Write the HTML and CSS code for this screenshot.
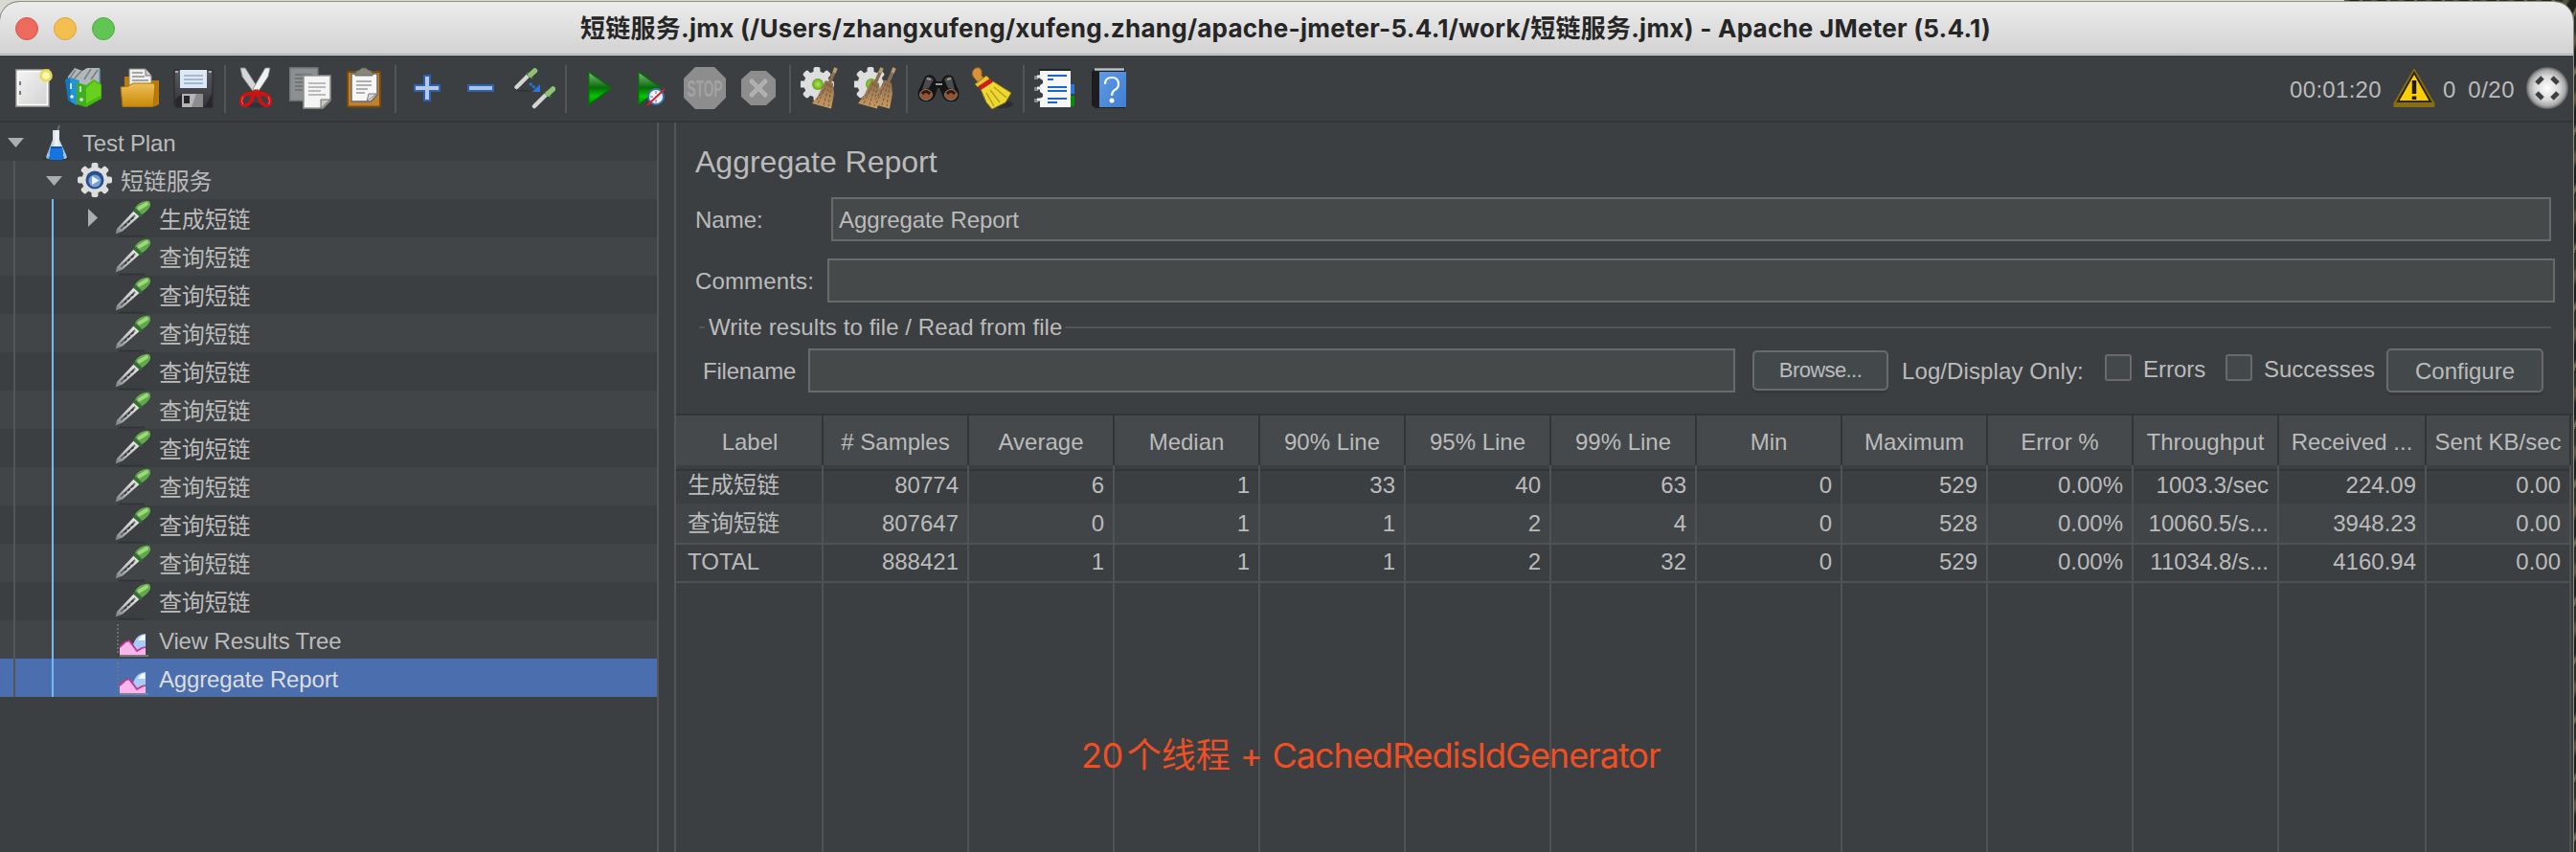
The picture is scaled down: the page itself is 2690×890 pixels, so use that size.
FILE: index.html
```html
<!DOCTYPE html>
<html lang="zh-CN">
<head>
<meta charset="utf-8">
<title>短链服务.jmx - Apache JMeter (5.4.1)</title>
<link rel="stylesheet" href="styles.css">
</head>
<body>
<svg class="defs" width="0" height="0" aria-hidden="true">
  <defs>
    <linearGradient id="paper" x1="0" y1="0" x2="1" y2="1"><stop offset="0" stop-color="#f4f4f4"/><stop offset="1" stop-color="#d2d2d2"/></linearGradient>
    <linearGradient id="folder" x1="0" y1="0" x2="0" y2="1"><stop offset="0" stop-color="#eebf5c"/><stop offset="1" stop-color="#c98a06"/></linearGradient>
    <linearGradient id="play" x1="0" y1="0" x2="0" y2="1"><stop offset="0" stop-color="#7cc47c"/><stop offset=".48" stop-color="#0b6a0b"/><stop offset=".75" stop-color="#00c800"/><stop offset="1" stop-color="#0a7d0a"/></linearGradient>
    <linearGradient id="disk" x1="0" y1="0" x2="0" y2="1"><stop offset="0" stop-color="#5a5a62"/><stop offset="1" stop-color="#333338"/></linearGradient>
    <linearGradient id="book" x1="0" y1="0" x2="1" y2="1"><stop offset="0" stop-color="#5f9ae4"/><stop offset="1" stop-color="#3f7fd2"/></linearGradient>
    <linearGradient id="flask" x1="0" y1="0" x2="1" y2="0"><stop offset="0" stop-color="#8fa0ac"/><stop offset=".5" stop-color="#f2f5f8"/><stop offset="1" stop-color="#a9b5c0"/></linearGradient>
    <linearGradient id="glass" x1="0" y1="1" x2="1" y2="0"><stop offset="0" stop-color="#77797b"/><stop offset=".45" stop-color="#c4c4c4"/><stop offset="1" stop-color="#ececec"/></linearGradient>
    <linearGradient id="straw" x1="0" y1="0" x2="0" y2="1"><stop offset="0" stop-color="#8a6a48"/><stop offset=".5" stop-color="#a8845c"/><stop offset="1" stop-color="#cf9c5c"/></linearGradient>
    <radialGradient id="ball"><stop offset="0" stop-color="#ffffff"/><stop offset=".6" stop-color="#d6d6d6"/><stop offset=".85" stop-color="#a8a8a8"/><stop offset="1" stop-color="#5c5e60"/></radialGradient>
    <radialGradient id="green"><stop offset="0" stop-color="#b8e84a"/><stop offset="1" stop-color="#5fa81c"/></radialGradient>

    <symbol id="pipette" viewBox="0 0 40 40">
      <path d="M4 38.600H31" stroke="#303335" stroke-width="1.800"/>
      <path d="M.5 36.500L2 31L19.500 12.500L25.500 18L8 33.500Z" fill="url(#glass)"/>
      <path d="M6 31L21 17" stroke="#5b5e60" stroke-width="1.800"/>
      <path d="M10 28L20 18.500" stroke="#303335" stroke-width="1.600" stroke-dasharray="3 2"/>
      <path d="M20 10.500L28 17.500" stroke="#34702f" stroke-width="4"/>
      <path d="M21 9L28.500 16Q34 13 37 7Q38 1 32 2Q25 3 21 9Z" fill="#60a84c"/>
      <path d="M25.500 9.500L33 5" stroke="#9fd57c" stroke-width="4" stroke-linecap="round"/>
    </symbol>
    <symbol id="chart" viewBox="0 0 40 40">
      <path d="M3 4V36" stroke="#77797b" stroke-width="1.500" stroke-dasharray="2 2"/>
      <path d="M5 37H35" stroke="#8a8c8e" stroke-width="1.500"/>
      <path d="M19 25Q23 14 32 14V29L28 29L23 31Z" fill="#a9cafa"/>
      <path d="M24 21Q27 15 31.500 15V21Z" fill="#f3f9ff"/>
      <path d="M5 36V28L11 23L15 21.500L20 27L23 31L27 30L32 28V36Z" fill="#fbb4ec"/>
      <path d="M5 28L11 22.500L15 21.500L20 28L23 32L28 29L32 28" fill="none" stroke="#c03a8c" stroke-width="1.800"/>
    </symbol>
    <symbol id="cog" viewBox="0 0 36 36">
      <g fill="#dedede"><circle cx="18" cy="18" r="13.500"/>
      <rect x="14.500" y="0" width="7" height="36" rx="2"/><rect x="14.500" y="0" width="7" height="36" rx="2" transform="rotate(45 18 18)"/><rect x="14.500" y="0" width="7" height="36" rx="2" transform="rotate(90 18 18)"/><rect x="14.500" y="0" width="7" height="36" rx="2" transform="rotate(135 18 18)"/></g>
    </symbol>
    <symbol id="besom" viewBox="0 0 28 44">
      <path d="M26 1L19 17" stroke="#8b6d4f" stroke-width="3.500"/><path d="M26 1L24 6" stroke="#b99a77" stroke-width="3.500"/>
      <path d="M15 14L23 17L24 28L21 43.500L1 38L7 30Z" fill="url(#straw)"/>
      <path d="M17 17L7 38M19 18L13 40M21 19L18 41M13 24L6 34" stroke="#745536" stroke-width="1" stroke-dasharray="3 2"/>
    </symbol>
  </defs>
</svg>

<div class="window">
  <header class="titlebar">
    <div class="lights"><i class="light red"></i><i class="light yellow"></i><i class="light green"></i></div>
    <h1 class="title">短链服务.jmx (/Users/zhangxufeng/xufeng.zhang/apache-jmeter-5.4.1/work/短链服务.jmx) - Apache JMeter (5.4.1)</h1>
  </header>

  <nav class="toolbar">
    <svg class="tool" viewBox="0 0 44 44"><rect x="4.800" y="2.800" width="34.400" height="38.400" fill="url(#paper)" stroke="#8b8d85" stroke-width="1.600"/><rect x="6.500" y="4.500" width="31" height="35" fill="none" stroke="#fff" stroke-width="1.500"/><path d="M9 15v4M9 25v4" stroke="#77777c" stroke-width="2"/><circle cx="36" cy="9" r="6.800" fill="#e9dc5a"/><circle cx="36" cy="9" r="3.800" fill="#fff9c0"/></svg>
    <svg class="tool" viewBox="0 0 44 44"><path d="M3 10L10 1L18 4L23 1H36V18L18 22L2 17Z" fill="#b2b7b9"/><path d="M4 13L11 3M8 14L17 4M20 13L27 2M27 13L34 3" stroke="#777e82" stroke-width="1.500"/><path d="M36 2V18" stroke="#6b93ad" stroke-width="1.500"/><path d="M0 13L5 11L12 16V40L3 35Z" fill="#1377bd"/><path d="M5 11L15 14L12 40L6 36Z" fill="#2494d4"/><path d="M12 16L22 19V42L12 39Z" fill="#3fae1f"/><path d="M22 19L30 13L38 18V33L22 42Z" fill="#46b811"/><path d="M22 22L30 15L37 19V30L22 38Z" fill="#68cf1c"/><circle cx="7" cy="31" r="1.800" fill="#fff"/><circle cx="17" cy="34" r="1.800" fill="#fff"/><path d="M6 17v6M16 20v6" stroke="#c3e4f0" stroke-width="2"/></svg>
    <svg class="tool" viewBox="0 0 44 44"><path d="M6 10H13L15 14H42V39L38 41H6Z" fill="#b97c08"/><path d="M11 2H28L34 9V24H11Z" fill="#f0f0f0" stroke="#85877f" stroke-width="1"/><path d="M28 2V9H34" fill="#ccc" stroke="#777" stroke-width="1"/><path d="M14 6H25M14 10H27M14 14H31M14 18H31" stroke="#8c8c8c" stroke-width="1.500"/><path d="M2 21L10 20L15 17H37L38 20L36 41.500H4Z" fill="url(#folder)" stroke="#a87206" stroke-width="1"/></svg>
    <svg class="tool" viewBox="0 0 44 44"><path d="M2 3H42V42H4L2 40Z" fill="url(#disk)" stroke="#26272a"/><path d="M3 5h3M38 5h3" stroke="#aaa" stroke-width="2"/><path d="M3 34L10 28V42H4ZM41 28L34 42H41Z" fill="#26262b"/><rect x="8" y="3" width="28" height="19" fill="#dce8f3"/><path d="M12 9H32M12 13H32M12 17H32" stroke="#8fa9c4" stroke-width="1.700"/><rect x="10" y="28" width="22" height="14" fill="#b4b4b4"/><path d="M25 28H32V42H20Z" fill="#8c8c8c"/><rect x="12" y="30" width="6" height="8" fill="#26262b"/></svg>
    <span class="rule"></span>
    <svg class="tool" viewBox="0 0 44 44"><ellipse cx="21" cy="40" rx="14" ry="2.500" fill="#303335"/><path d="M5 1L10 1L24 23L20 28L7 10Z" fill="#d6d6d6" stroke="#858585" stroke-width=".8"/><path d="M36 1L31 1L18 23L22 28L34 10Z" fill="#f0f0f0" stroke="#858585" stroke-width=".8"/><path d="M19 24L21 28L24 24" stroke="#d01818" stroke-width="4" fill="none"/><path d="M19 28L14 28Q8 28 6 34Q5 41 11 40Q17 38 19 28ZM24 28L29 28Q34 29 36 34Q37 41 31 40Q25 38 24 28Z" fill="none" stroke="#c81414" stroke-width="4"/><path d="M8 31Q5 36 8 39M34 31Q37 36 34 39" fill="none" stroke="#f25050" stroke-width="1.200"/></svg>
    <svg class="tool" viewBox="0 0 44 44"><rect x=".8" y="1" width="29" height="34" fill="#8d9092" stroke="#777a7b" stroke-width="1.600"/><path d="M6 8H24M6 12H15M6 16H15M6 20H15M6 24H15" stroke="#6a6d6e" stroke-width="1.500"/><path d="M15 9H43V35L35 43H15Z" fill="#f4f4f4" stroke="#90928c" stroke-width="1.600"/><path d="M33 43V34H43Z" fill="#c6c9c0" stroke="#6e7268"/><path d="M20 17H38M20 21H38M20 25H33M20 29H38" stroke="#a8a8a8" stroke-width="1.700"/></svg>
    <svg class="tool" viewBox="0 0 44 44"><rect x="5" y="5" width="34" height="36.500" rx="1" fill="#c08030" stroke="#7c4a06" stroke-width="2"/><path d="M9 7H36V29L29 36H9Z" fill="#f6f6f6" stroke="#686868" stroke-width="1.500"/><path d="M25 36L27 28H35Z" fill="#dcdcdc" stroke="#777"/><path d="M14 15H30M14 19H30M14 23H26M14 27H23" stroke="#999" stroke-width="1.700"/><path d="M13 9V6Q14 4 18 3Q19 1 22 1Q25 1 26 3Q30 4 31 6V9Z" fill="#858878" stroke="#686b60"/></svg>
    <span class="rule"></span>
    <svg class="tool" viewBox="0 0 44 44"><path d="M19 9H25V19H35V25H25V35H19V25H9V19H19Z" fill="#b4cae8" stroke="#2f62ab" stroke-width="2"/></svg>
    <svg class="tool" viewBox="0 0 44 44"><rect x="9" y="19" width="26" height="6" fill="#a9c3e6" stroke="#2f62ab" stroke-width="2"/></svg>
    <svg class="tool" viewBox="0 0 44 44"><path d="M4 25H18" stroke="#303335" stroke-width="1.500"/><path d="M3.500 21L15 9.500M22 41L33 30" stroke="#d4d4d0" stroke-width="4.500" stroke-linecap="round"/><path d="M14 6L20 12M33 26L39 31" stroke="#42703c" stroke-width="3"/><path d="M18 8L22.500 4M36 28L41.500 23" stroke="#8fc274" stroke-width="5.500" stroke-linecap="round"/><path d="M17 17L24 23" stroke="#2476e8" stroke-width="2.500" stroke-dasharray="3 1"/><path d="M20 26H28V18Z" fill="#2476e8"/></svg>
    <span class="rule"></span>
    <svg class="tool" viewBox="0 0 44 44"><path d="M12.700 5L36.500 22L12.700 39.500Z" fill="url(#play)" stroke="#0a6b0a" stroke-width="1.500"/></svg>
    <svg class="tool" viewBox="0 0 44 44"><path d="M8.700 5L32.500 22L8.700 39.500Z" fill="url(#play)" stroke="#0a6b0a" stroke-width="1.500"/><circle cx="27" cy="31" r="8" fill="#f0f3f8" stroke="#3d74b8" stroke-width="2"/><path d="M27 25v3M27 34v3M21 31h3" stroke="#667"/><path d="M18 40L36 23" stroke="#d0202c" stroke-width="2"/></svg>
    <svg class="tool" viewBox="0 0 44 44"><path d="M12 0H32L44 12V32L32 44H12L0 32V12Z" fill="#8d8d8d"/><g transform="translate(22 30.500) scale(.57 1)"><text class="stop-word" text-anchor="middle">STOP</text></g></svg>
    <svg class="tool" viewBox="0 0 44 44"><path d="M14 4H30L40 13V31L30 40H14L4 31V13Z" fill="#8d8d8d"/><path d="M15 15L29 29M29 15L15 29" stroke="#b0b0b0" stroke-width="5" stroke-linecap="round"/></svg>
    <span class="rule"></span>
    <svg class="tool" viewBox="0 0 44 44"><use href="#cog" x="-1" y="0" width="36" height="36"/><circle cx="18" cy="18" r="6" fill="url(#green)"/><use href="#besom" x="11" y="0" width="28" height="44"/></svg>
    <svg class="tool" viewBox="0 0 44 44"><use href="#cog" x="-1" y="0" width="36" height="36"/><circle cx="18" cy="18" r="6" fill="url(#green)"/><use href="#besom" x="3" y="0" width="28" height="44"/><use href="#besom" x="16" y="0" width="28" height="44"/></svg>
    <span class="rule"></span>
    <svg class="tool" viewBox="0 0 44 44"><path d="M8 10Q14 6 18 11L20 15H25L27 11Q32 6 37 10L43 25Q45 36 36 36Q28 37 26 29L23 22H21L19 29Q16 37 8 36Q-1 35 1 25Z" fill="#151515"/><path d="M9 11Q13 9 17 13L12 22L5 24ZM36 11Q32 9 28 13L32 22L39 24Z" fill="#4a4b4d"/><path d="M10 12L14 13M31 13L35 12M19 18H26" stroke="#9b9b9b" stroke-width="2"/><ellipse cx="9" cy="29" rx="6.500" ry="5.500" fill="#96542e" stroke="#777" stroke-width="1"/><ellipse cx="35" cy="29" rx="6.500" ry="5.500" fill="#96542e" stroke="#777" stroke-width="1"/><path d="M5 28Q9 23 13 28M31 28Q35 23 39 28" fill="none" stroke="#36180b" stroke-width="3"/></svg>
    <svg class="tool" viewBox="0 0 44 44"><ellipse cx="31" cy="39" rx="13" ry="4" fill="#2d2f31"/><path d="M2 4Q4 0 9 1Q12 3 11 9L15 14L9 18L3 11Q0 8 2 4Z" fill="#d6923d" stroke="#9c6117"/><path d="M4 18L16 9L21 14L7 21Z" fill="#e5c82b" stroke="#8c7610"/><path d="M10 23L23 15L42 27L36 37L22 44L16 37Z" fill="#edd833" stroke="#8c7a12"/><path d="M16 27L24 41M20 24L30 37M24 21L37 32" stroke="#b79f19" stroke-width="1.500"/><path d="M9 22L21 14" stroke="#cf1c1c" stroke-width="5"/></svg>
    <span class="rule"></span>
    <svg class="tool" viewBox="0 0 44 44"><path d="M5 3H38" stroke="#222" stroke-width="2"/><rect x="37" y="18" width="5" height="10" fill="#2879e0"/><rect x="37" y="30" width="5" height="11" fill="#078d07"/><path d="M6 4H38V42H6V33L9 31V28L6 26V19L9 17V14L6 12Z" fill="#f7f7f7"/><path d="M0 11h4M0 23h4M0 35h4" stroke="#888" stroke-width="4"/><path d="M3 10h5M3 22h5M3 34h5" stroke="#eee" stroke-width="3"/><path d="M14 9H34M14 13H20M14 21H34M14 25H34M14 33H34M14 37H24" stroke="#1765dc" stroke-width="2"/></svg>
    <svg class="tool" viewBox="0 0 44 44"><path d="M4 5L8 1H39V43H8L4 40Z" fill="#1d1d1d"/><path d="M7 2.500H38" stroke="#bfc3c6" stroke-width="2.500"/><path d="M12 5H40V42H12Z" fill="url(#book)"/><path d="M18 18Q18 11 25 11Q32 11 32 18Q32 22 28 24Q25 26 25 30" fill="none" stroke="#f2f6fb" stroke-width="2.200"/><circle cx="25" cy="35" r="2.500" fill="#fff"/></svg>

    <div class="status">
      <span class="clock">00:01:20</span>
      <svg class="warn" viewBox="0 0 44 44"><path d="M22 3L42.500 38V41H1.500V38Z" fill="#8a6d10" stroke="#8a6d10" stroke-width="2" stroke-linejoin="round"/><path d="M22 6L39 36H5Z" fill="#ffcf05" stroke="#2d2503" stroke-width="2"/><path d="M22 14V28M22 30.500V34" stroke="#1d1a10" stroke-width="4.500"/></svg>
      <span class="errors-count">0</span>
      <span class="threads">0/20</span>
      <svg class="run" viewBox="0 0 44 44"><circle cx="22" cy="22" r="22" fill="url(#ball)"/><path d="M11 17L17 11M27 11L33 17M33 27L27 33M17 33L11 27" stroke="#3d3f40" stroke-width="5"/></svg>
    </div>
  </nav>

  <main class="workspace">
    <aside class="tree">
      <div class="node d0"><span class="twist open"></span><svg class="icon" viewBox="0 0 40 40"><path d="M22 3L20 9" stroke="#6b6e70" stroke-width="2"/><ellipse cx="19" cy="37.500" rx="14" ry="1.500" fill="#2a2c2e"/><path d="M15 8H22V18L30 36Q30 38 26 38H10Q8 38 8 36L15 18Z" fill="url(#flask)"/><path d="M13 25H25L27 36Q27 39 24 39H14Q10 39 11 36Z" fill="#1474e0"/><path d="M13 26H24" stroke="#0f55b5" stroke-width="2"/><path d="M9 34H12M26 34H29" stroke="#8fc2ff" stroke-width="3"/></svg><span class="name">Test Plan</span></div>
      <div class="node d1 alt"><span class="twist open"></span><svg class="icon" viewBox="0 0 40 40"><use href="#cog" x="1" y="2" width="36" height="36"/><circle cx="19" cy="20" r="9.500" fill="#28508e"/><circle cx="19" cy="21" r="6.500" fill="#7b9fd2"/><path d="M16 16L23.500 20.500L16 25Z" fill="#eef4ff"/></svg><span class="name">短链服务</span></div>
      <div class="node d2"><span class="twist closed"></span><svg class="icon"><use href="#pipette"/></svg><span class="name">生成短链</span></div>
      <div class="node d2 alt"><span class="twist"></span><svg class="icon"><use href="#pipette"/></svg><span class="name">查询短链</span></div>
      <div class="node d2"><span class="twist"></span><svg class="icon"><use href="#pipette"/></svg><span class="name">查询短链</span></div>
      <div class="node d2 alt"><span class="twist"></span><svg class="icon"><use href="#pipette"/></svg><span class="name">查询短链</span></div>
      <div class="node d2"><span class="twist"></span><svg class="icon"><use href="#pipette"/></svg><span class="name">查询短链</span></div>
      <div class="node d2 alt"><span class="twist"></span><svg class="icon"><use href="#pipette"/></svg><span class="name">查询短链</span></div>
      <div class="node d2"><span class="twist"></span><svg class="icon"><use href="#pipette"/></svg><span class="name">查询短链</span></div>
      <div class="node d2 alt"><span class="twist"></span><svg class="icon"><use href="#pipette"/></svg><span class="name">查询短链</span></div>
      <div class="node d2"><span class="twist"></span><svg class="icon"><use href="#pipette"/></svg><span class="name">查询短链</span></div>
      <div class="node d2 alt"><span class="twist"></span><svg class="icon"><use href="#pipette"/></svg><span class="name">查询短链</span></div>
      <div class="node d2"><span class="twist"></span><svg class="icon"><use href="#pipette"/></svg><span class="name">查询短链</span></div>
      <div class="node d2 alt"><span class="twist"></span><svg class="icon"><use href="#chart"/></svg><span class="name">View Results Tree</span></div>
      <div class="node d2 selected"><span class="twist"></span><svg class="icon"><use href="#chart"/></svg><span class="name">Aggregate Report</span></div>
    </aside>

    <section class="panel">
      <div class="form">
        <h2 class="heading">Aggregate Report</h2>
        <div class="row name-row"><label class="label">Name:</label><div class="field">Aggregate Report</div></div>
        <div class="row comment-row"><label class="label">Comments:</label><div class="field"></div></div>
        <div class="legend"><span class="legend-text">Write results to file / Read from file</span></div>
        <div class="row file-row">
          <label class="label">Filename</label><div class="field"></div>
          <button class="button browse">Browse...</button>
          <span class="log-only">Log/Display Only:</span>
          <span class="box"></span><span class="check errors">Errors</span>
          <span class="box"></span><span class="check successes">Successes</span>
          <button class="button configure">Configure</button>
        </div>
      </div>
      <div class="grid">
        <div class="tr head"><div>Label</div><div># Samples</div><div>Average</div><div>Median</div><div>90% Line</div><div>95% Line</div><div>99% Line</div><div>Min</div><div>Maximum</div><div>Error %</div><div>Throughput</div><div>Received ...</div><div>Sent KB/sec</div></div>
        <div class="tr"><div>生成短链</div><div>80774</div><div>6</div><div>1</div><div>33</div><div>40</div><div>63</div><div>0</div><div>529</div><div>0.00%</div><div>1003.3/sec</div><div>224.09</div><div>0.00</div></div>
        <div class="tr alt"><div>查询短链</div><div>807647</div><div>0</div><div>1</div><div>1</div><div>2</div><div>4</div><div>0</div><div>528</div><div>0.00%</div><div>10060.5/s...</div><div>3948.23</div><div>0.00</div></div>
        <div class="tr"><div>TOTAL</div><div>888421</div><div>1</div><div>1</div><div>1</div><div>2</div><div>32</div><div>0</div><div>529</div><div>0.00%</div><div>11034.8/s...</div><div>4160.94</div><div>0.00</div></div>
        <div class="tr rest"><div></div><div></div><div></div><div></div><div></div><div></div><div></div><div></div><div></div><div></div><div></div><div></div><div></div></div>
        <p class="note"><span>20</span><span class="note-cjk">个线程</span><span>+</span><span class="note-name">CachedRedisIdGenerator</span></p>
      </div>
    </section>
  </main>
</div>
</body>
</html>
```

FILE: styles.css
```css
* { box-sizing: border-box; }

body {
  margin: 0;
  width: 2690px;
  height: 890px;
  overflow: hidden;
  padding-top: 2px;
  color: #bbbbbb;
  font: 24px/40px "Liberation Sans", "Noto Sans CJK SC", sans-serif;
  background:
    linear-gradient(#d9d9d0, #d9d9d0) 0 0 / 2448px 40px no-repeat,
    repeating-linear-gradient(115deg, #2b2e22 0 7px, #565141 9px 12px, #1e211a 15px 22px, #6b6650 24px 26px);
}

.defs { position: absolute; }

.window {
  width: 2687px;
  height: 888px;
  display: flex;
  flex-direction: column;
  background: #3c3f41;
  border-radius: 20px 20px 0 0;
  overflow: hidden;
  box-shadow: 0 0 0 1px #8f8f88;
}

.titlebar {
  height: 56px;
  flex: none;
  display: grid;
  grid-template-columns: 150px 1fr 150px;
  align-items: center;
  background: linear-gradient(#ececec, #d2d2d2);
  border-bottom: 1px solid #dcdcdc;
  box-shadow: inset 0 -1px #a8a8a8;
}

.lights { display: flex; gap: 16px; padding-left: 16px; }
.light { width: 24px; height: 24px; border-radius: 50%; border: 1px solid; }
.red { background: #ed6a5e; border-color: #d5554a; }
.yellow { background: #f5bf4f; border-color: #dba53a; }
.green { background: #61c554; border-color: #4fab43; }

.title {
  margin: 0;
  padding-right: 2px;
  text-align: center;
  white-space: nowrap;
  color: #262626;
  font: 700 26px/54px Inter, "Noto Sans CJK SC", sans-serif;
  letter-spacing: .25px;
}

.toolbar {
  height: 70px;
  flex: none;
  display: flex;
  gap: 12px;
  padding: 12px 5px 0 12px;
  border-bottom: 2px solid #323537;
}

.tool, .warn, .run { width: 44px; height: 44px; flex: none; }
.rule { width: 2px; height: 50px; margin: -2px -2px 0; background: #555555; flex: none; }
.stop-word { font: bold 24px "Liberation Sans", sans-serif; fill: #a2a2a2; }

.status { display: flex; margin-left: auto; line-height: 47px; white-space: nowrap; }
.clock { letter-spacing: .3px; }
.warn { margin: 0 8px 0 12px; }
.threads { margin-left: 13px; letter-spacing: .5px; }
.run { margin-left: 12px; }

.workspace { flex: 1; display: flex; min-height: 0; }

.tree { width: 688px; flex: none; border-right: 2px solid #555555; }
.node { height: 40px; display: flex; background-color: #3c3f41; background-repeat: no-repeat; }
.node.alt { background-color: #414547; }
.d1 {
  padding-left: 40px;
  background-image: linear-gradient(#555555, #555555);
  background-size: 2px 100%;
  background-position: 14px 0;
}
.d2 {
  padding-left: 80px;
  background-image: linear-gradient(#555555, #555555), linear-gradient(#77b7f2, #77b7f2);
  background-size: 2px 100%;
  background-position: 14px 0, 54px 0;
}
.node.selected { background-color: #4b6eaf; color: #dddddd; }
.icon { width: 40px; height: 40px; flex: none; }
.name { padding: 0 0 0 6px; line-height: 43px; white-space: nowrap; letter-spacing: -.15px; }
.twist { width: 40px; height: 40px; flex: none; padding: 16px 0 0 8px; }
.open::before, .closed::before { content: ""; display: block; background: #adadad; }
.open::before { width: 17px; height: 10px; clip-path: polygon(0 0, 100% 0, 50% 100%); }
.closed::before { width: 10px; height: 19px; margin: -6px 0 0 4px; clip-path: polygon(0 0, 100% 50%, 0 100%); }

.panel { flex: 1; display: flex; flex-direction: column; margin-left: 16px; border-left: 2px solid #555555; padding-right: 1px; min-width: 0; }

.form { height: 304px; flex: none; }
.heading { margin: 0; padding: 17px 0 0 20px; height: 78px; font: 400 32px/48px "Liberation Sans", sans-serif; }
.row { display: flex; height: 46px; white-space: nowrap; padding-left: 20px; line-height: 48px; }
.label { flex: none; }
.field { height: 46px; flex: 1; background: #45494a; border: 2px solid #6a6a6b; padding-left: 6px; line-height: 44px; letter-spacing: -.1px; }
.name-row { padding-right: 22px; }
.name-row .label { width: 142px; }
.comment-row { margin-top: 18px; padding-right: 18px; }
.comment-row .label { width: 138px; letter-spacing: .15px; }

.legend { height: 48px; display: flex; align-items: center; padding: 3px 22px 0 24px; }
.legend::before, .legend::after { content: ""; height: 2px; background: #555555; }
.legend::before { width: 6px; }
.legend::after { flex: 1; margin-left: 3px; }
.legend-text { padding-left: 4px; white-space: nowrap; line-height: 24px; letter-spacing: .08px; }

.file-row { padding-left: 28px; }
.file-row .label { width: 110px; letter-spacing: -.2px; }
.file-row .field { flex: none; width: 968px; }
.button {
  margin: 0;
  padding: 0;
  color: #bbbbbb;
  background: #43494a;
  border: 2px solid #6a6a6b;
  border-radius: 5px;
  box-shadow: 0 3px #35393a;
  font: 24px/44px "Liberation Sans", sans-serif;
}
.browse { width: 142px; height: 42px; margin: 2px 0 0 18px; font-size: 22px; line-height: 38px; letter-spacing: -.6px; }
.log-only { margin-left: 14px; width: 212px; letter-spacing: .1px; }
.box { width: 28px; height: 28px; margin-top: 6px; background: #43494a; border: 2px solid #6a6a6b; border-radius: 3px; }
.check { margin-left: 12px; line-height: 43px; }
.errors { width: 86px; }
.successes { width: 128px; }
.configure { width: 164px; height: 46px; }

.grid { flex: 1; display: flex; flex-direction: column; border-top: 2px solid #323537; position: relative; overflow: hidden; }
.tr { display: grid; grid-template-columns: 154px repeat(10, 152px) 154px 151px; height: 40px; flex: none; }
.tr > div { border-right: 2px solid #505152; border-bottom: 2px solid #505152; padding: 0 9px; text-align: right; white-space: nowrap; line-height: 41px; }
.tr > div:first-child { text-align: left; padding-left: 12px; }
.tr.alt > div { background: #414547; }
.tr.head { height: 52px; background: #45494b; }
.tr.head > div { border-color: #323537; text-align: center; padding: 0; line-height: 56px; }
.tr.head > div:first-child { text-align: center; padding: 0 0 0 2px; }
.tr.rest { flex: 1; }
.tr.rest > div { border-bottom: 0; }

/* annotation laid over the empty part of the table */
.note {
  position: absolute;
  left: 423px;
  top: 329px;
  margin: 0;
  display: flex;
  color: #f04e23;
  white-space: nowrap;
  font: 36px/52px Inter, "Noto Sans CJK SC", sans-serif;
}
.note span { margin-right: 10px; }
.note span:first-child { margin-right: 4px; letter-spacing: -.5px; }
.note .note-name { letter-spacing: -1px; }
```
